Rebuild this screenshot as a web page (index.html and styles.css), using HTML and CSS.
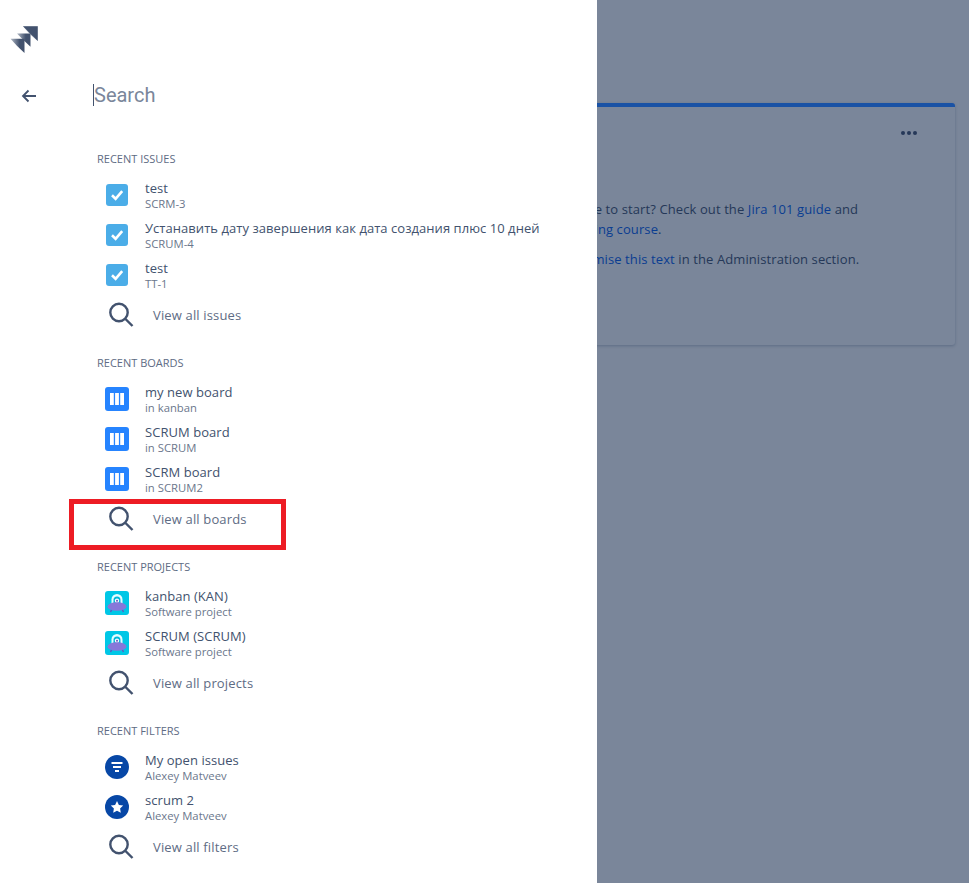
FILE: index.html
```html
<!DOCTYPE html>
<html lang="en">
<head>
<meta charset="utf-8">
<title>Search</title>
<link rel="stylesheet" href="styles.css">
</head>
<body>
<div class="page">
  <aside class="panel">
    <div class="rail">
      <svg class="logo" width="28" height="28" viewBox="0 0 28 28">
        <defs>
          <linearGradient id="fade" x1="0" y1="0" x2="1" y2="0"><stop offset="0" stop-color="#b3bac5"/><stop offset="0.65" stop-color="#42526e"/></linearGradient>
        </defs>
        <path d="M13.500 .5H27.500V14.500Q20 8 13.500 .5z" fill="#42526e" stroke="#42526e" stroke-width=".6" stroke-linejoin="round"/>
        <path d="M7 7.500H20.500V20.800Q13.500 14.500 7 7.500z" fill="url(#fade)"/>
        <path d="M.5 12.800H14.500V27Q7 20.500 .5 12.800z" fill="url(#fade)"/>
      </svg>
      <svg class="back" width="16" height="14" viewBox="0 0 16 14"><path d="M15 7H2M7.500 1.500 2 7l5.500 5.500" fill="none" stroke="#42526e" stroke-width="1.800"/></svg>
    </div>
    <div class="content">
      <div class="search"><span class="caret"></span><span class="placeholder">Search</span></div>

      <section class="group">
        <h2 class="group-title">RECENT ISSUES</h2>
        <a class="row"><span class="icon issue"><svg width="22" height="22" viewBox="0 0 22 22"><path d="M6 11.300 9.600 14.800 16.200 7.200" fill="none" stroke="#fff" stroke-width="2.600"/></svg></span><span class="text"><span class="title">test</span><span class="sub">SCRM-3</span></span></a>
        <a class="row"><span class="icon issue"><svg width="22" height="22" viewBox="0 0 22 22"><path d="M6 11.300 9.600 14.800 16.200 7.200" fill="none" stroke="#fff" stroke-width="2.600"/></svg></span><span class="text"><span class="title">Устанавить дату завершения как дата создания плюс 10 дней</span><span class="sub">SCRUM-4</span></span></a>
        <a class="row"><span class="icon issue"><svg width="22" height="22" viewBox="0 0 22 22"><path d="M6 11.300 9.600 14.800 16.200 7.200" fill="none" stroke="#fff" stroke-width="2.600"/></svg></span><span class="text"><span class="title">test</span><span class="sub">TT-1</span></span></a>
        <a class="view"><svg class="lens" width="26" height="26" viewBox="0 0 26 26"><circle cx="11" cy="10.500" r="8.700" fill="none" stroke="#42526e" stroke-width="2.400"/><path d="M17.500 17 24.500 24" stroke="#42526e" stroke-width="2.400"/></svg><span class="view-label">View all issues</span></a>
      </section>

      <section class="group">
        <h2 class="group-title">RECENT BOARDS</h2>
        <a class="row"><span class="icon board"><svg width="24" height="24" viewBox="0 0 24 24"><path d="M5 6h3.800v12H5zM10.100 6h3.800v12h-3.800zM15.200 6H19v12h-3.800z" fill="#fff"/></svg></span><span class="text"><span class="title">my new board</span><span class="sub">in kanban</span></span></a>
        <a class="row"><span class="icon board"><svg width="24" height="24" viewBox="0 0 24 24"><path d="M5 6h3.800v12H5zM10.100 6h3.800v12h-3.800zM15.200 6H19v12h-3.800z" fill="#fff"/></svg></span><span class="text"><span class="title">SCRUM board</span><span class="sub">in SCRUM</span></span></a>
        <a class="row"><span class="icon board"><svg width="24" height="24" viewBox="0 0 24 24"><path d="M5 6h3.800v12H5zM10.100 6h3.800v12h-3.800zM15.200 6H19v12h-3.800z" fill="#fff"/></svg></span><span class="text"><span class="title">SCRM board</span><span class="sub">in SCRUM2</span></span></a>
        <a class="view"><svg class="lens" width="26" height="26" viewBox="0 0 26 26"><circle cx="11" cy="10.500" r="8.700" fill="none" stroke="#42526e" stroke-width="2.400"/><path d="M17.500 17 24.500 24" stroke="#42526e" stroke-width="2.400"/></svg><span class="view-label">View all boards</span><span class="highlight"></span></a>
      </section>

      <section class="group">
        <h2 class="group-title">RECENT PROJECTS</h2>
        <a class="row"><span class="icon project"><svg width="24" height="24" viewBox="0 0 24 24"><path d="M7 18 5.500 21M17 18 18.500 21" stroke="#6554c0" stroke-width="1.400"/><path d="M6.500 14V8.500a5.500 5.500 0 0 1 11 0V14z" fill="#e6fcff"/><path d="M8.500 14V9a3.500 3.500 0 0 1 7 0v5z" fill="#00b8d9"/><circle cx="12" cy="9.800" r="2.200" fill="#fff"/><circle cx="12" cy="9.800" r="1" fill="#6554c0"/><ellipse cx="12" cy="15.500" rx="9.500" ry="4.300" fill="#8777d9"/></svg></span><span class="text"><span class="title">kanban (KAN)</span><span class="sub">Software project</span></span></a>
        <a class="row"><span class="icon project"><svg width="24" height="24" viewBox="0 0 24 24"><path d="M7 18 5.500 21M17 18 18.500 21" stroke="#6554c0" stroke-width="1.400"/><path d="M6.500 14V8.500a5.500 5.500 0 0 1 11 0V14z" fill="#e6fcff"/><path d="M8.500 14V9a3.500 3.500 0 0 1 7 0v5z" fill="#00b8d9"/><circle cx="12" cy="9.800" r="2.200" fill="#fff"/><circle cx="12" cy="9.800" r="1" fill="#6554c0"/><ellipse cx="12" cy="15.500" rx="9.500" ry="4.300" fill="#8777d9"/></svg></span><span class="text"><span class="title">SCRUM (SCRUM)</span><span class="sub">Software project</span></span></a>
        <a class="view"><svg class="lens" width="26" height="26" viewBox="0 0 26 26"><circle cx="11" cy="10.500" r="8.700" fill="none" stroke="#42526e" stroke-width="2.400"/><path d="M17.500 17 24.500 24" stroke="#42526e" stroke-width="2.400"/></svg><span class="view-label">View all projects</span></a>
      </section>

      <section class="group">
        <h2 class="group-title">RECENT FILTERS</h2>
        <a class="row"><span class="icon filter"><svg width="24" height="24" viewBox="0 0 24 24"><path d="M6.500 8h11M8 12h8M10 16h4" stroke="#fff" stroke-width="2"/></svg></span><span class="text"><span class="title">My open issues</span><span class="sub">Alexey Matveev</span></span></a>
        <a class="row"><span class="icon filter"><svg width="24" height="24" viewBox="0 0 24 24"><path d="m12 6 1.900 3.900 4.300.6-3.100 3 .7 4.300L12 15.800 8.200 17.800l.7-4.300-3.100-3 4.300-.6z" fill="#fff"/></svg></span><span class="text"><span class="title">scrum 2</span><span class="sub">Alexey Matveev</span></span></a>
        <a class="view"><svg class="lens" width="26" height="26" viewBox="0 0 26 26"><circle cx="11" cy="10.500" r="8.700" fill="none" stroke="#42526e" stroke-width="2.400"/><path d="M17.500 17 24.500 24" stroke="#42526e" stroke-width="2.400"/></svg><span class="view-label">View all filters</span></a>
      </section>
    </div>
  </aside>

  <main class="backdrop">
    <div class="card">
      <div class="card-menu"><span class="dot"></span><span class="dot"></span><span class="dot"></span></div>
      <div class="card-body">
        <p class="card-line">Not sure where to start? Check out the <a class="link">Jira 101 guide</a> and</p>
        <p class="card-line"><a class="link">Atlassian training course</a>.</p>
        <p class="card-line card-gap"><a class="link">You can customise this text</a> in the Administration section.</p>
      </div>
    </div>
  </main>
</div>
</body>
</html>
```

FILE: styles.css
```css
* { box-sizing: border-box; }
html, body { margin: 0; height: 100%; }
body { font-family: "Open Sans", "Noto Sans", sans-serif; overflow: hidden; }

.page { display: flex; width: 969px; height: 883px; overflow: hidden; }

.panel { flex: 0 0 597px; display: flex; background: #fff; position: relative; z-index: 1; }
.rail { flex: 0 0 93px; display: flex; flex-direction: column; padding: 26px 0 0 10px; }
.logo { display: block; }
.back { display: block; margin: 35px 0 0 11px; }

.content { flex: 1; display: flex; flex-direction: column; }
.search { height: 30px; margin-top: 80px; display: flex; align-items: center; flex: none; }
.caret { width: 1px; height: 22px; background: #42526e; }
.placeholder { font-family: Roboto, sans-serif; font-size: 20px; line-height: 30px; color: #7a869a; }

.group { margin-left: 4px; margin-bottom: 16px; }
.search + .group { margin-top: 39px; }
.group-title { margin: 0; height: 20px; line-height: 20px; font-size: 11px; font-weight: 400; color: #5e6c84; }

.row { display: flex; align-items: center; height: 40px; padding-left: 8px; }
.group-title + .row { margin-top: 6px; }
.icon { flex: 0 0 24px; width: 24px; height: 24px; display: flex; align-items: center; justify-content: center; }
.icon svg { display: block; }
.issue svg { background: #4bade8; border-radius: 3px; }
.board { background: #2684ff; border-radius: 3px; }
.project { background: #00c7e6; border-radius: 3px; }
.filter { background: #0747a6; border-radius: 50%; }
.text { display: flex; flex-direction: column; margin-left: 16px; }
.title { font-size: 13px; line-height: 17px; letter-spacing: .05px; color: #42526e; white-space: nowrap; }
.sub { font-size: 11.3px; line-height: 14px; color: #6b778c; white-space: nowrap; }

.view { position: relative; display: flex; align-items: center; height: 42px; padding: 0 0 2px 11px; }
.lens { flex: none; display: block; }
.view-label { margin-left: 19px; font-size: 13px; letter-spacing: .15px; color: #5e6c84; white-space: nowrap; }
.highlight { position: absolute; left: -28px; top: 0; width: 217px; height: 51px; border: 5px solid #ed1c24; }

.backdrop { flex: 1; background: #7a869a; padding: 103px 14px 0 0; min-width: 0; }
.card { position: relative; width: 658px; height: 242px; margin-left: -300px; border-top: 4px solid #1a52a5; border-radius: 3px; background: #7a869a; box-shadow: 0 1px 3px rgba(9,30,66,.25); }
.card-menu { position: absolute; top: 24px; right: 38px; display: flex; gap: 2px; }
.dot { width: 4px; height: 4px; border-radius: 50%; background: #253858; }
.card-body { padding: 92px 0 0 210px; font-size: 13px; letter-spacing: .1px; color: #253858; }
.card-line { margin: 0; line-height: 20px; white-space: nowrap; }
.card-gap { margin-top: 10px; }
.link { color: #0a3d91; }
```
